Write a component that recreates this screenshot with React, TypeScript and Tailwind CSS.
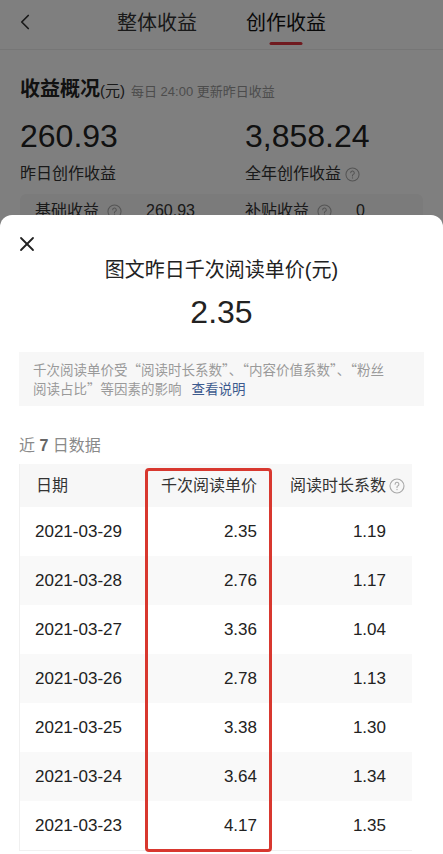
import { ChevronLeft, X } from 'lucide-react'

const rows = [
  { date: '2021-03-29', price: '2.35', ratio: '1.19' },
  { date: '2021-03-28', price: '2.76', ratio: '1.17' },
  { date: '2021-03-27', price: '3.36', ratio: '1.04' },
  { date: '2021-03-26', price: '2.78', ratio: '1.13' },
  { date: '2021-03-25', price: '3.38', ratio: '1.30' },
  { date: '2021-03-24', price: '3.64', ratio: '1.34' },
  { date: '2021-03-23', price: '4.17', ratio: '1.35' },
]

function Help({ size = 15 }: { size?: number }) {
  return (
    <svg width={size} height={size} viewBox="0 0 16 16" fill="none" className="shrink-0">
      <circle cx="8" cy="8" r="7" stroke="#a8a8a8" strokeWidth="1.1" />
      <path d="M6.1 6.2a1.9 1.9 0 1 1 2.7 1.7c-.5.3-.8.6-.8 1.2v.5" stroke="#a8a8a8" strokeWidth="1.1" strokeLinecap="round" />
      <circle cx="8" cy="11.6" r=".7" fill="#a8a8a8" />
    </svg>
  )
}

export default function App() {
  return (
    <div className="relative w-[443px] h-[854px] overflow-hidden bg-white font-['Liberation_Sans','Noto_Sans_CJK_SC',sans-serif] text-[#222]">
      {/* page behind the sheet */}
      <div className="h-[50px] relative flex items-center justify-center gap-[49px] border-b border-[#ececec]">
        <ChevronLeft className="absolute left-[12px] top-[9px] w-[26px] h-[26px] text-[#333]" strokeWidth={1.6} />
        <span className="text-[20px] text-[#333] -mt-[3px]">整体收益</span>
        <div className="relative -mt-[3px]">
          <span className="text-[20px] text-[#111]">创作收益</span>
          <span className="absolute left-1/2 -translate-x-1/2 top-[34px] w-[33px] h-[3px] bg-[#e0353f] rounded-full" />
        </div>
      </div>

      <div className="px-5 pt-[24px]">
        <div className="flex items-baseline">
          <span className="text-[20px] font-bold">收益概况</span>
          <span className="text-[15px] text-[#333]">(元)</span>
          <span className="ml-[6px] text-[13px] text-[#999]">每日 24:00 更新昨日收益</span>
        </div>
        <div className="grid grid-cols-[225px_1fr] mt-[12px]">
          <div>
            <div className="text-[32px] leading-[40px]">260.93</div>
            <div className="text-[16px] mt-[6px] text-[#333]">昨日创作收益</div>
          </div>
          <div>
            <div className="text-[32px] leading-[40px]">3,858.24</div>
            <div className="text-[16px] mt-[6px] text-[#333] flex items-center gap-1">全年创作收益<Help /></div>
          </div>
        </div>
        <div className="mt-[8px] rounded-[6px] bg-[#f6f6f6] h-[50px] grid grid-cols-[210px_1fr] px-[15px] pt-[7px] text-[16px] text-[#333]">
          <div className="flex items-center gap-2 h-[20px]">基础收益<Help /><span className="ml-4">260.93</span></div>
          <div className="flex items-center gap-2 h-[20px]">补贴收益<Help /><span className="ml-4">0</span></div>
        </div>
      </div>

      {/* dim overlay */}
      <div className="absolute inset-0 bg-black/50" />

      {/* bottom sheet */}
      <div className="absolute left-0 right-0 top-[215px] bottom-0 bg-white rounded-t-[12px]">
        <X className="absolute left-[15px] top-[17px] w-[24px] h-[24px] text-[#222]" strokeWidth={1.8} />
        <div className="pt-[42px] text-center text-[20px] leading-[26px] text-[#222]">图文昨日千次阅读单价(元)</div>
        <div className="mt-[9px] text-center text-[32px] leading-[40px] text-[#222]">2.35</div>

        <div className="mx-[19px] mt-[20px] bg-[#f7f7f7] px-[14px] py-[8px] text-[13.5px] leading-[19px] text-[#9a9a9a] font-['Noto_Sans_CJK_SC',sans-serif]">
          <div className="whitespace-nowrap">千次阅读单价受“阅读时长系数”、“内容价值系数”、“粉丝</div>
          <div>
            阅读占比”等因素的影响<span className="ml-[10px] text-[#3c5a8e]">查看说明</span>
          </div>
        </div>

        <div className="ml-[19px] mt-[30px] text-[16px] leading-[20px] text-[#8a8a8a]">近 <span className="font-bold text-[#666]">7</span> 日数据</div>

        <div className="relative ml-[19px] mt-[8px] w-[393px] border-l border-b border-[#f0f0f0]">
          <div className="grid grid-cols-[126px_125px_142px] h-[43px] items-center bg-[#f7f7f7] text-[16px] text-[#333]">
            <div className="pl-[16px]">日期</div>
            <div className="text-right pr-[14px]">千次阅读单价</div>
            <div className="flex items-center justify-end gap-[3px] pr-[8px]">阅读时长系数<Help size={16} /></div>
          </div>
          {rows.map((r, i) => (
            <div
              key={r.date}
              className={`grid grid-cols-[126px_125px_142px] h-[49px] items-center text-[17px] text-[#222] ${i % 2 === 1 ? 'bg-[#f9f9f9]' : 'bg-white'}`}
            >
              <div className="pl-[15px]">{r.date}</div>
              <div className="text-right pr-[14px]">{r.price}</div>
              <div className="text-right pr-[27px]">{r.ratio}</div>
            </div>
          ))}
          {/* red highlight box */}
          <div className="absolute left-[125px] top-[4px] w-[127px] bottom-[-2px] border-[3px] border-[#d8382f] rounded-[4px]" />
        </div>
      </div>
    </div>
  )
}
